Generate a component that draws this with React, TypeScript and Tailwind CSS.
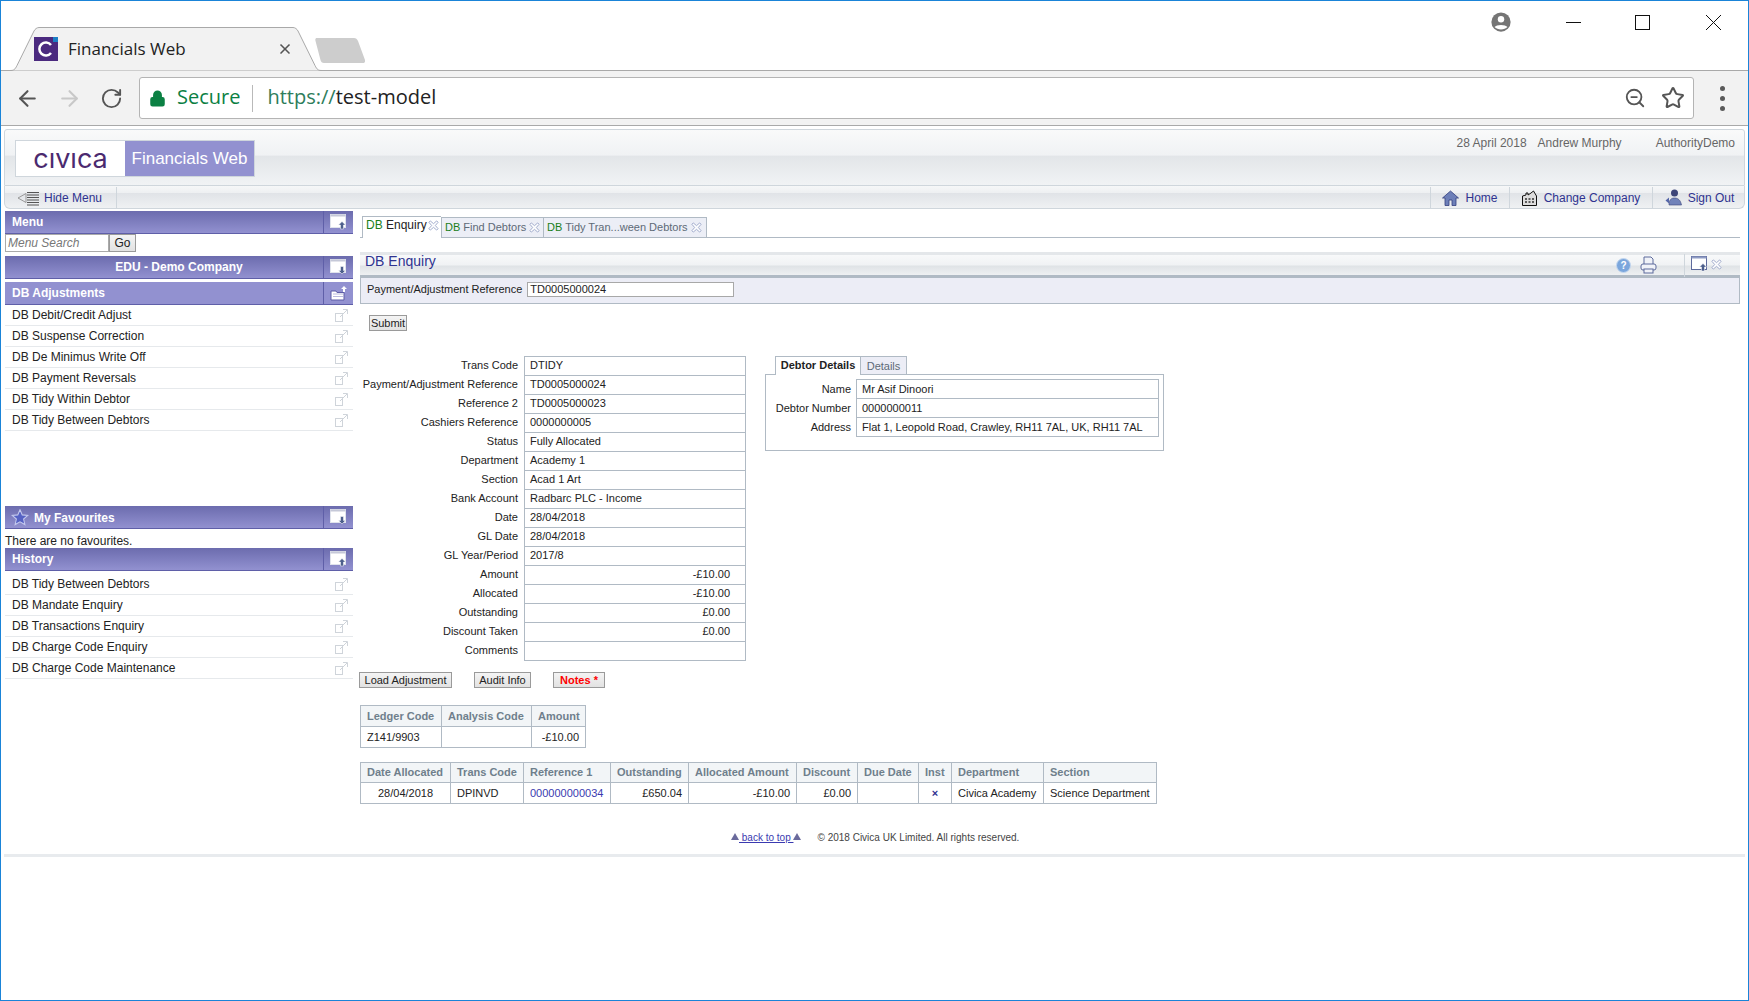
import { ArrowLeft, ArrowRight, RotateCw, Lock, ZoomOut, Star, X } from 'lucide-react'

const font = 'font-["Liberation_Sans",Arial,sans-serif]'

const menuItems = [
  'DB Debit/Credit Adjust',
  'DB Suspense Correction',
  'DB De Minimus Write Off',
  'DB Payment Reversals',
  'DB Tidy Within Debtor',
  'DB Tidy Between Debtors',
]

const historyItems = [
  'DB Tidy Between Debtors',
  'DB Mandate Enquiry',
  'DB Transactions Enquiry',
  'DB Charge Code Enquiry',
  'DB Charge Code Maintenance',
]

const details: [string, string, boolean?][] = [
  ['Trans Code', 'DTIDY'],
  ['Payment/Adjustment Reference', 'TD0005000024'],
  ['Reference 2', 'TD0005000023'],
  ['Cashiers Reference', '0000000005'],
  ['Status', 'Fully Allocated'],
  ['Department', 'Academy 1'],
  ['Section', 'Acad 1 Art'],
  ['Bank Account', 'Radbarc PLC - Income'],
  ['Date', '28/04/2018'],
  ['GL Date', '28/04/2018'],
  ['GL Year/Period', '2017/8'],
  ['Amount', '-£10.00', true],
  ['Allocated', '-£10.00', true],
  ['Outstanding', '£0.00', true],
  ['Discount Taken', '£0.00', true],
  ['Comments', ''],
]

const allocCols = [
  ['Date Allocated', 'w-[90px]'],
  ['Trans Code', 'w-[73px]'],
  ['Reference 1', 'w-[87px]'],
  ['Outstanding', 'w-[78px]'],
  ['Allocated Amount', 'w-[108px]'],
  ['Discount', 'w-[61px]'],
  ['Due Date', 'w-[61px]'],
  ['Inst', 'w-[33px]'],
  ['Department', 'w-[92px]'],
  ['Section', 'flex-1'],
]

function PanelIcon({ variant = 'up', outline }: { variant?: 'up' | 'down' | 'open'; outline?: boolean }) {
  if (variant === 'open') {
    return (
      <svg width="18" height="16" viewBox="0 0 18 16">
        <path d="M1 6h5l1 1.500h7V15H1z" fill="#fff" stroke="#5d5da6" />
        <path d="M3 9h10M3 11.500h10" stroke="#b9b9dd" />
        <path d="M14 1l3 3h-2v3h-2V4h-2z" fill="#fff" />
      </svg>
    )
  }
  return (
    <svg width="17" height="16" viewBox="0 0 17 16">
      <rect x="0.5" y="0.5" width="15" height="13" fill="#fff" stroke={outline ? '#5d6a9c' : '#dfe3ec'} />
      <rect x="0.5" y="0.5" width="15" height="2" fill={outline ? '#8f9cc4' : '#c5c8d8'} />
      {variant === 'up' ? (
        <path d="M12 7.500l3.500 3.500h-2v4h-3v-4h-2z" fill="#4d5f8c" stroke="#fff" strokeWidth="0.5" />
      ) : (
        <path d="M10.500 7.500h3v4h2l-3.500 3.500-3.500-3.500h2z" fill="#4d5f8c" stroke="#fff" strokeWidth="0.5" />
      )}
    </svg>
  )
}

function ItemIcon() {
  return (
    <svg width="13" height="13" viewBox="0 0 13 13" fill="none" stroke="#cfd4da">
      <rect x="0.5" y="4.500" width="7" height="8" />
      <path d="M5 8l7-7M8 0.500h4.500V5" />
    </svg>
  )
}

function CloseGlyph({ size = 12 }: { size?: number }) {
  return (
    <svg width={size} height={size} viewBox="0 0 12 12" fill="#fff" stroke="#9aa5c8" strokeWidth="1">
      <path d="M2.500 1l3.500 3 3.500-3 1.500 1.500-3 3.500 3 3.500-1.500 1.500-3.500-3-3.500 3-1.500-1.500 3-3.500-3-3.500z" />
    </svg>
  )
}

function SideHeader({
  children,
  icon = 'up',
  flat,
  center,
}: {
  children: React.ReactNode
  icon?: 'up' | 'down' | 'open'
  flat?: boolean
  center?: boolean
}) {
  return (
    <div className={`flex h-[23px] border-b border-[#5f5fa8] bg-gradient-to-b ${flat ? 'from-[#9291d0] to-[#9291d0]' : 'from-[#6c6cae] to-[#9291d0]'}`}>
      <div className={`flex flex-1 items-center text-[12px] font-bold text-white ${center ? 'justify-center pl-[37px] pr-[7px]' : 'px-[7px]'}`}>
        {children}
      </div>
      <div className="flex w-[30px] items-center justify-center border-l border-[#5f5fa8]">
        <PanelIcon variant={icon} />
      </div>
    </div>
  )
}

function MenuRow({ label }: { label: string }) {
  return (
    <div className="flex h-[21px] items-center justify-between border-b border-[#e6e9ec] pl-[7px] pr-[5px] text-[12px] text-[#222]">
      <span>{label}</span>
      <ItemIcon />
    </div>
  )
}

function Btn({ children, className = '' }: { children: React.ReactNode; className?: string }) {
  return (
    <div className={`flex h-[16px] items-center justify-center border border-[#9a9a9a] bg-gradient-to-b from-[#f4f4f4] to-[#e2e2e2] text-[11px] text-[#222] ${className}`}>
      {children}
    </div>
  )
}

function TabItem({ label, active, w }: { label: string; active?: boolean; w: string }) {
  return (
    <div
      className={`flex items-center border-[#b0bac4] ${w} ${
        active
          ? 'h-[22px] border-l border-t bg-white pb-[5px] pl-[3px]'
          : 'mt-[1px] h-[21px] border-b border-l border-t bg-[#eceef6] pl-[3px]'
      }`}
    >
      <span className={active ? 'text-[12px] text-[#222]' : 'text-[11px] text-[#5e6a76]'}>
        <span className="text-[#1a7f1a]">DB</span> {label}
      </span>
      <span className={active ? 'ml-[1px]' : 'ml-[3px]'}>
        <CloseGlyph size={11} />
      </span>
    </div>
  )
}

export default function App() {
  return (
    <div className={`${font} h-[1001px] w-[1749px] overflow-hidden border border-[#1a84d8] bg-white`}>
      {/* window title strip */}
      <div className="flex h-[70px] items-start border-b border-[#a9a9a9]">
        <div className="relative ml-[9px] mt-[26px] h-[44px] w-[312px]">
          <svg className="absolute inset-0" width="312" height="44" viewBox="0 0 312 44">
            <path d="M0 43.500c4 0 5-1 7-5L24 4c1-2 3-3.500 5-3.500h254c2 0 4 1.500 5 3.500l17 34.500c2 4 3 5 7 5" fill="#f2f2f2" stroke="#a9a9a9" />
          </svg>
          <div className="relative flex h-full items-center pl-[24px]">
            <svg width="24" height="24" viewBox="0 0 24 24">
              <rect width="24" height="24" fill="#4b2a7f" />
              <rect x="19" width="5" height="5" fill="#1d7fc4" />
              <path d="M17 8a6.500 6.500 0 1 0 0 8" fill="none" stroke="#fff" strokeWidth="2.500" />
            </svg>
            <span className="ml-[10px] font-['Open_Sans',sans-serif] text-[17px] text-[#222]">Financials Web</span>
            <X className="mb-[1px] ml-auto mr-[29px]" size={16} strokeWidth={2.500} color="#555" />
          </div>
        </div>
        <svg className="ml-[-7px] mt-[37px]" width="50" height="25" viewBox="0 0 50 25">
          <path d="M2 0h37c2 0 3 1 4 3l7 19c.500 2-.500 3-2 3H9c-2 0-3-1-3.500-3L.500 3C0 1 .500 0 2 0z" fill="#cdcdcd" />
        </svg>
        <div className="ml-auto flex items-center pr-[27px] pt-[10px] text-[#111]">
          <svg width="22" height="22" viewBox="0 0 24 24">
            <circle cx="12" cy="12" r="10.500" fill="#757575" />
            <circle cx="12" cy="9" r="3.500" fill="#fff" />
            <path d="M5 17.500c2-3 12-3 14 0-3 3.500-11 3.500-14 0z" fill="#fff" />
          </svg>
          <span className="ml-[54px] h-px w-[15px] bg-[#111]" />
          <span className="ml-[54px] h-[15px] w-[15px] border border-[#111]" />
          <svg className="ml-[56px]" width="15" height="15" viewBox="0 0 15 15" stroke="#111" fill="none">
            <path d="M0 0l15 15M15 0L0 15" />
          </svg>
        </div>
      </div>

      {/* browser toolbar */}
      <div className="flex h-[55px] items-center border-b border-[#a9a9a9] bg-[#f2f2f2]">
        <ArrowLeft className="ml-[14px]" size={25} strokeWidth={2} color="#555" />
        <ArrowRight className="ml-[17px]" size={25} strokeWidth={2} color="#c8c8c8" />
        <RotateCw className="ml-[18px]" size={23} strokeWidth={2} color="#555" />
        <div className="ml-[16px] flex h-[42px] w-[1555px] items-center rounded-[3px] border border-[#b4b4b4] bg-white font-['Open_Sans',sans-serif]">
          <Lock className="ml-[9px]" size={17} strokeWidth={2.500} color="#0b8043" fill="#0b8043" />
          <span className="mb-[2px] ml-[11px] text-[20px] text-[#0b8043]">Secure</span>
          <span className="ml-[12px] mr-[14px] h-[27px] w-px bg-[#b9b9b9]" />
          <span className="mb-[2px] text-[20px] text-[#2e7d5b]">https://</span>
          <span className="mb-[2px] text-[20px] text-[#222]">test-model</span>
          <ZoomOut className="ml-auto" size={22} strokeWidth={2} color="#555" />
          <Star className="ml-[15px] mr-[8px]" size={24} strokeWidth={2} color="#555" />
        </div>
        <div className="ml-[26px] flex flex-col gap-[5px]">
          <span className="h-[5px] w-[5px] rounded-full bg-[#5a5a5a]" />
          <span className="h-[5px] w-[5px] rounded-full bg-[#5a5a5a]" />
          <span className="h-[5px] w-[5px] rounded-full bg-[#5a5a5a]" />
        </div>
      </div>

      {/* page */}
      <div className="mx-[3px] mt-[3px] h-[728px] border-b-[3px] border-[#e8ebee]">
        <div className="flex h-[57px] items-start rounded-t-[3px] border border-[#cfd6dc] bg-[linear-gradient(#f9fafa_0%,#f0f2f4_46%,#e2e5e8_47%,#f1f3f5_100%)]">
          <div className="ml-[10px] mt-[10px] flex h-[37px] border border-[#cfd6dc]">
            <div className="flex w-[109px] items-center justify-center bg-white">
              <span className="font-['Inter',sans-serif] text-[27px] font-normal leading-none text-[#4b2a6f]">cıvıca</span>
            </div>
            <div className="flex w-[129px] items-center justify-center bg-[#9291d0] text-[17px] text-white">
              Financials Web
            </div>
          </div>
          <div className="ml-auto mt-[4px] flex text-[12px] text-[#666]">
            <span>28 April 2018</span>
            <span className="ml-[11px]">Andrew Murphy</span>
            <span className="ml-[34px] mr-[9px]">AuthorityDemo</span>
          </div>
        </div>
        <div className="flex h-[23px] items-stretch rounded-b-[6px] border-x border-b border-[#cfd6dc] bg-[linear-gradient(#f6f7f8_0%,#eef0f2_30%,#e0e3e7_32%,#eff1f3_100%)] pt-[1px] text-[12px] text-[#2f3390]">
          <div className="flex w-[112px] items-center rounded-bl-[6px] border-r border-[#cfd6dc] pl-[12px]">
            <svg width="23" height="16" viewBox="0 0 23 16" fill="none" stroke="#555">
              <path d="M9 3.500L1 8l8 4.500z" stroke="#999" />
              <path d="M10 2.500h12M10 5h12M10 7.500h12M10 10h12M10 12.500h12M10 15h12" />
            </svg>
            <span className="ml-[4px]">Hide Menu</span>
          </div>
          <div className="ml-auto flex w-[79px] items-center justify-center gap-[6px] border-l border-[#cfd6dc]">
            <svg width="17" height="16" viewBox="0 0 17 16">
              <path d="M8.500 1L0.500 8h2.500v7.500h4V10h3v5.500h4V8h2.500z" fill="#6d7fb8" stroke="#34407f" strokeWidth="0.800" />
            </svg>
            <span>Home</span>
          </div>
          <div className="flex w-[143px] items-center justify-center gap-[7px] border-l border-[#cfd6dc]">
            <svg width="15" height="16" viewBox="0 0 15 16">
              <path d="M0.500 15.500V6L4 5V3h2v2l3-2 2.500-2 3 5v9.500z" fill="#ddd" stroke="#111" />
              <path d="M3 9h2M6.500 9h2M10 9h2M3 12h2M6.500 12h2M10 12h2" stroke="#333" strokeWidth="1.500" />
            </svg>
            <span>Change Company</span>
          </div>
          <div className="flex w-[92px] items-center justify-center gap-[6px] border-l border-[#cfd6dc] pl-[2px]">
            <svg width="17" height="17" viewBox="0 0 17 17">
              <circle cx="9.500" cy="4" r="3.500" fill="#3d4578" />
              <path d="M4 16c0-5 2-7 5.500-7s6 2 7 7z" fill="#7183ba" stroke="#3d4578" strokeWidth="0.600" />
              <path d="M0.500 11.500L4 8.500v6z" fill="#5566a8" />
            </svg>
            <span>Sign Out</span>
          </div>
        </div>

        <div className="flex pt-[2px]">
          {/* sidebar */}
          <div className="ml-[1px] w-[348px]">
            <SideHeader>Menu</SideHeader>
            <div className="flex h-[18px]">
              <div className="flex w-[104px] items-center border border-[#aaa] pl-[2px] text-[12px] italic text-[#777]">Menu Search</div>
              <Btn className="h-[18px] w-[27px] text-[12px]">Go</Btn>
            </div>
            <div className="h-[4px]" />
            <SideHeader center icon="down">EDU - Demo Company</SideHeader>
            <div className="h-[3px]" />
            <SideHeader flat icon="open">DB Adjustments</SideHeader>
            {menuItems.map((m) => (
              <MenuRow key={m} label={m} />
            ))}
            <div className="h-[75px]" />
            <SideHeader icon="down">
              <svg width="18" height="17" viewBox="0 0 24 24" className="ml-[-1px] mr-[5px]">
                <path d="M12 1l3.200 7.300 7.800.7-5.900 5.200 1.800 7.800L12 18l-6.900 4 1.800-7.800L1 9l7.800-.7z" fill="#5662c4" stroke="#c3c8ee" strokeWidth="1.500" />
              </svg>
              <span className="mt-[2px]">My Favourites</span>
            </SideHeader>
            <div className="flex h-[19px] items-end text-[12px] leading-[14px] text-[#222]">There are no favourites.</div>
            <SideHeader>History</SideHeader>
            <div className="h-[3px]" />
            {historyItems.map((m) => (
              <MenuRow key={m} label={m} />
            ))}
          </div>

          {/* main */}
          <div className="ml-[7px] flex-1 pr-[5px] pt-[5px] text-[11px] text-[#222]">
            <div className="flex h-[22px] border-b border-[#b0bac4] pl-[2px]">
              <TabItem label="Enquiry" active w="w-[79px]" />
              <TabItem label="Find Debtors" w="w-[102px]" />
              <TabItem label="Tidy Tran...ween Debtors" w="w-[164px] border-r" />
            </div>

            <div className="mt-[14px] flex h-[26px] items-center border-b-[3px] border-t-[3px] border-b-[#b0bac4] border-t-[#e4e7ea] bg-[linear-gradient(#f8f9fa_0%,#f0f2f4_50%,#dfe3e6_55%,#eef0f2_100%)] pl-[5px]">
              <span className="mb-[8px] text-[14px] text-[#2f3390]">DB Enquiry</span>
              <div className="ml-auto flex items-center">
                <svg width="15" height="15" viewBox="0 0 15 15">
                  <circle cx="7.500" cy="7.500" r="7" fill="#7ba6dc" stroke="#c4d7ee" />
                  <text x="7.500" y="11" textAnchor="middle" fontSize="10" fontWeight="700" fill="#fff" fontFamily="Liberation Sans">?</text>
                </svg>
                <svg className="ml-[9px]" width="17" height="18" viewBox="0 0 17 18" fill="#f0f2f8" stroke="#5d6a9c">
                  <path d="M4 8V1h7l2 2v5" />
                  <rect x="1" y="8" width="15" height="6" rx="2" />
                  <rect x="4" y="13" width="9" height="4" />
                </svg>
                <div className="ml-[27px] flex h-[23px] w-[56px] items-center gap-[3px] border-l border-[#cfd6dc] pb-[2px] pl-[6px]">
                  <PanelIcon outline />
                  <CloseGlyph size={11} />
                </div>
              </div>
            </div>
            <div className="flex h-[26px] items-center border-x border-b border-[#b0bac4] bg-[#ecedf6] pb-[2px] pl-[6px]">
              <span>Payment/Adjustment Reference</span>
              <div className="ml-[5px] flex h-[15px] w-[207px] items-center border border-[#a8a8a8] bg-white pl-[2px]">TD0005000024</div>
            </div>

            <Btn className="ml-[9px] mt-[11px] w-[38px]">Submit</Btn>

            <div className="mt-[25px] flex items-start">
              <div className="flex w-[386px]">
                <div className="w-[164px] whitespace-nowrap text-right">
                  {details.map(([l]) => (
                    <div key={l} className="flex h-[19px] items-center justify-end pr-[6px]">{l}</div>
                  ))}
                </div>
                <div className="w-[222px] border border-b-0 border-[#b0bac4]">
                  {details.map(([l, v, right]) => (
                    <div key={l} className={`flex h-[19px] items-center border-b border-[#b0bac4] pb-[1px] pl-[5px] pr-[15px] ${right ? 'justify-end' : ''}`}>{v}</div>
                  ))}
                </div>
              </div>

              <div className="ml-[19px] w-[399px]">
                <div className="ml-[10px] flex h-[18px] items-stretch">
                  <div className="relative z-10 mb-[-1px] flex w-[86px] items-center justify-center border-x border-t border-[#b0bac4] bg-white pb-[2px] font-bold text-[#222]">Debtor Details</div>
                  <div className="flex w-[46px] items-center justify-center border-r border-t border-[#b0bac4] bg-[#ecedf6] pt-[1px] text-[#5e6a76]">Details</div>
                </div>
                <div className="h-[77px] border border-[#b0bac4] pl-[90px] pr-[4px] pt-[4px]">
                  <div className="relative border border-b-0 border-[#b0bac4]">
                    {[
                      ['Name', 'Mr Asif Dinoori'],
                      ['Debtor Number', '0000000011'],
                      ['Address', 'Flat 1, Leopold Road, Crawley, RH11 7AL, UK, RH11 7AL'],
                    ].map(([l, v]) => (
                      <div key={l} className="flex h-[19px] items-center border-b border-[#b0bac4] pl-[5px]">
                        <span className="absolute right-full mr-[6px] whitespace-nowrap">{l}</span>
                        {v}
                      </div>
                    ))}
                  </div>
                </div>
              </div>
            </div>

            <div className="ml-[-1px] mt-[11px] flex">
              <Btn className="w-[93px]">Load Adjustment</Btn>
              <Btn className="ml-[22px] w-[57px]">Audit Info</Btn>
              <Btn className="ml-[22px] w-[52px] font-bold text-[#f00]">Notes *</Btn>
            </div>

            <div className="mt-[17px] w-[226px] border border-b-0 border-[#b0bac4]">
              <div className="flex h-[21px] items-center border-b border-[#b0bac4] bg-[#f2f5f7] font-bold text-[#6f7f8c]">
                <div className="flex h-full w-[81px] items-center border-r border-[#b0bac4] pl-[6px]">Ledger Code</div>
                <div className="flex h-full w-[90px] items-center border-r border-[#b0bac4] pl-[6px]">Analysis Code</div>
                <div className="pl-[6px]">Amount</div>
              </div>
              <div className="flex h-[21px] items-center border-b border-[#b0bac4]">
                <div className="flex h-full w-[81px] items-center border-r border-[#b0bac4] pl-[6px]">Z141/9903</div>
                <div className="h-full w-[90px] border-r border-[#b0bac4]" />
                <div className="flex-1 pr-[6px] text-right">-£10.00</div>
              </div>
            </div>

            <div className="mt-[14px] w-[797px] border border-b-0 border-[#b0bac4]">
              <div className="flex h-[20px] items-center border-b border-[#b0bac4] bg-[#f2f5f7] font-bold text-[#6f7f8c]">
                {allocCols.map(([c, w]) => (
                  <div key={c} className={`flex h-full items-center border-r border-[#b0bac4] pl-[6px] last:border-r-0 ${w}`}>{c}</div>
                ))}
              </div>
              <div className="flex h-[21px] items-center border-b border-[#b0bac4]">
                <div className="flex h-full w-[90px] items-center justify-center border-r border-[#b0bac4]">28/04/2018</div>
                <div className="flex h-full w-[73px] items-center border-r border-[#b0bac4] pl-[6px]">DPINVD</div>
                <div className="flex h-full w-[87px] items-center border-r border-[#b0bac4] pl-[6px] text-[#3a3ab0]">000000000034</div>
                <div className="flex h-full w-[78px] items-center justify-end border-r border-[#b0bac4] pr-[6px]">£650.04</div>
                <div className="flex h-full w-[108px] items-center justify-end border-r border-[#b0bac4] pr-[6px]">-£10.00</div>
                <div className="flex h-full w-[61px] items-center justify-end border-r border-[#b0bac4] pr-[6px]">£0.00</div>
                <div className="h-full w-[61px] border-r border-[#b0bac4]" />
                <div className="flex h-full w-[33px] items-center justify-center border-r border-[#b0bac4] font-bold text-[#2f3390]">×</div>
                <div className="flex h-full w-[92px] items-center border-r border-[#b0bac4] pl-[6px]">Civica Academy</div>
                <div className="pl-[6px]">Science Department</div>
              </div>
            </div>

            <div className="ml-[371px] mt-[26px] flex items-center text-[10px] text-[#444]">
              <span className="mb-[3px] h-0 w-0 border-x-[4px] border-b-[7px] border-x-transparent border-b-[#6a6a9c]" />
              <span className="whitespace-pre text-[#3a3ab0] underline"> back to top </span>
              <span className="mb-[3px] h-0 w-0 border-x-[4px] border-b-[7px] border-x-transparent border-b-[#6a6a9c]" />
              <span className="ml-[16px]">© 2018 Civica UK Limited. All rights reserved.</span>
            </div>
          </div>
        </div>
      </div>
    </div>
  )
}
